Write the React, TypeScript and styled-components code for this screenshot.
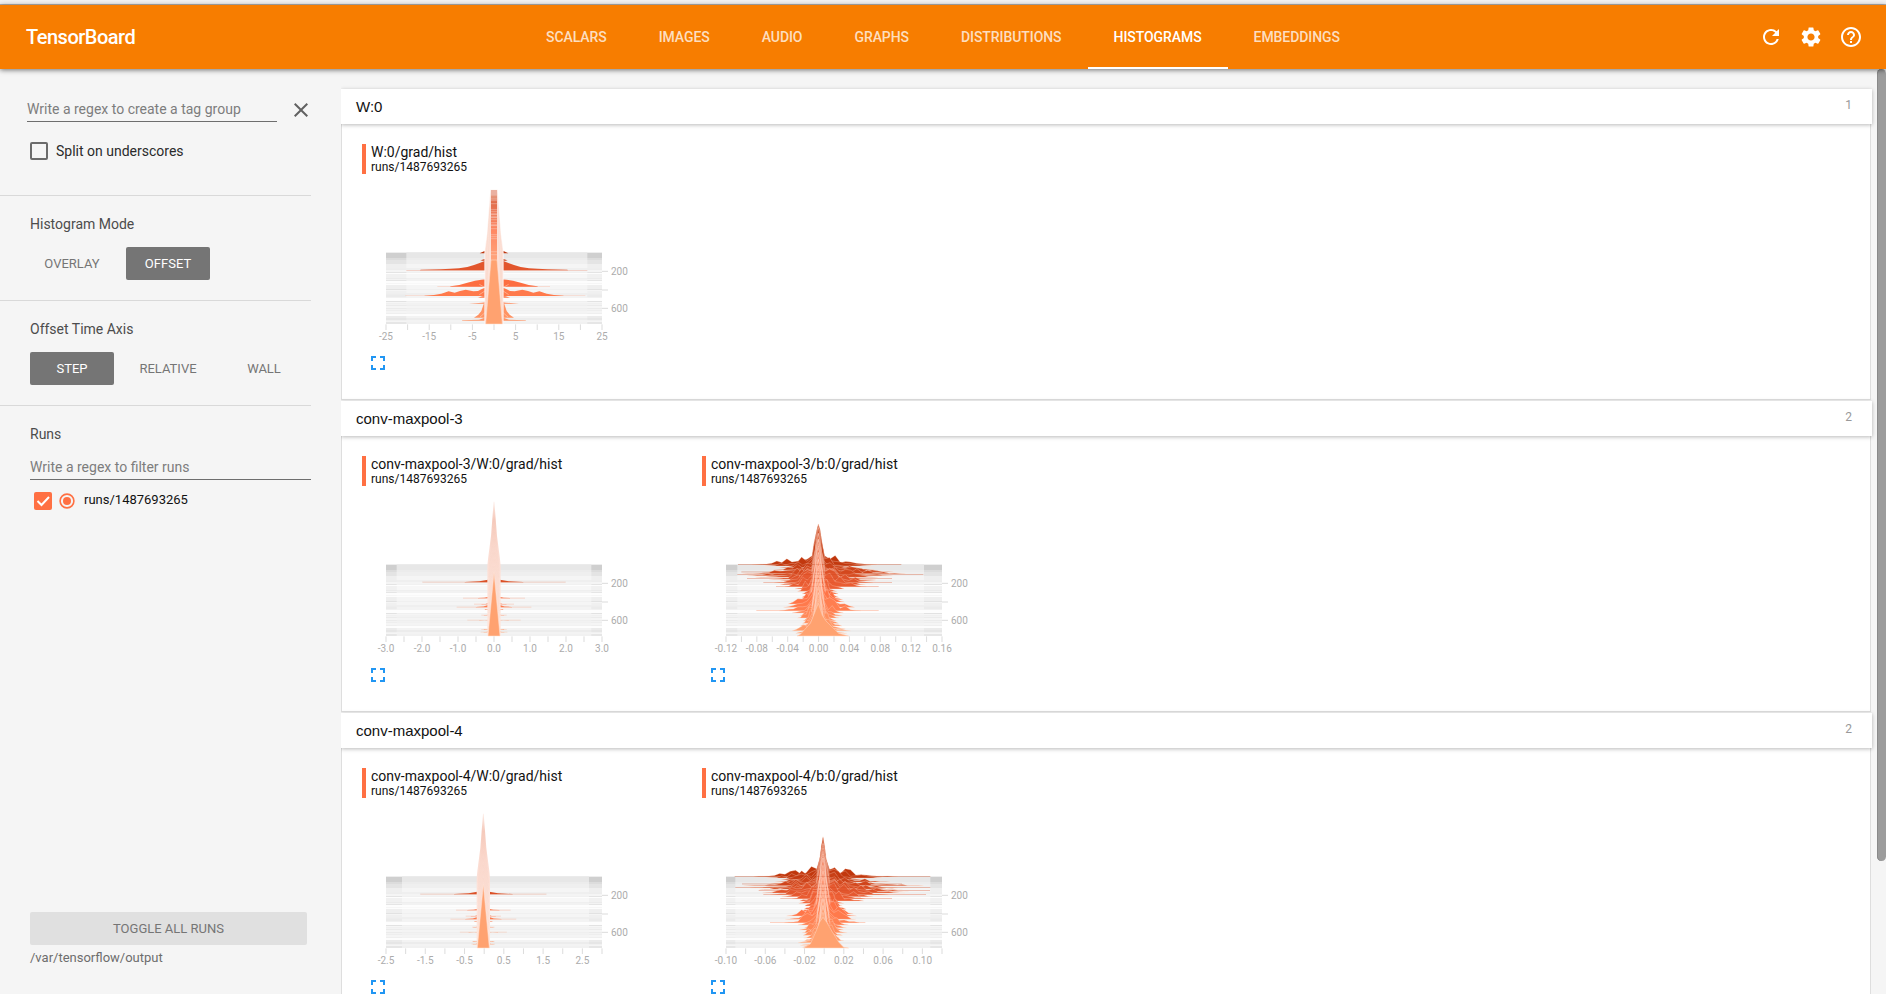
import React from 'react';
import styled, { createGlobalStyle } from 'styled-components';
import { MdRefresh, MdSettings, MdHelpOutline, MdClose, MdFullscreen } from 'react-icons/md';

const GlobalStyle = createGlobalStyle`
  * { box-sizing: border-box; }
  html, body { margin: 0; padding: 0; height: 100%; overflow: hidden; }
  body { background: #f5f5f5; font-family: Roboto, sans-serif; }
  #root { height: 100%; }
`;

const Page = styled.div`
  display: flex;
  flex-direction: column;
  height: 100vh;
  overflow: hidden;
`;

const WindowEdge = styled.div`
  flex: none;
  height: 5px;
  background: #f2f1f0;
  border-bottom: 1px solid #b6b3b0;
`;

const Toolbar = styled.header`
  flex: none;
  position: relative;
  z-index: 2;
  height: 64px;
  display: flex;
  align-items: stretch;
  background: #f77d00;
  box-shadow: 0 1px 5px rgba(0, 0, 0, 0.55);
`;

const Brand = styled.div`
  width: 520px;
  padding-left: 26px;
  line-height: 64px;
  font-size: 20px;
  font-weight: 500;
  letter-spacing: -0.5px;
  color: #fff;
`;

const Tabs = styled.nav`
  display: flex;
  flex: 1;
`;

const Tab = styled.div<{ $active?: boolean }>`
  padding: 0 26px;
  line-height: 64px;
  font-size: 14px;
  font-weight: 500;
  letter-spacing: -0.07px;
  color: ${(p) => (p.$active ? '#fff' : 'rgba(255,255,255,0.76)')};
  box-shadow: ${(p) => (p.$active ? 'inset 0 -2px 0 #fff' : 'none')};
`;

const Actions = styled.div`
  display: flex;
  align-items: center;
  gap: 16px;
  padding-right: 23px;
  color: #fff;
  svg { display: block; }
`;

const Main = styled.div`
  flex: 1;
  min-height: 0;
  display: flex;
`;

const Sidebar = styled.aside`
  flex: none;
  width: 341px;
  display: flex;
  flex-direction: column;
  padding-right: 30px;
`;

const Group = styled.section<{ $height: number }>`
  height: ${(p) => p.$height}px;
  border-bottom: 1px solid #d9d9d9;
  padding-left: 30px;
`;

const RegexRow = styled.div`
  display: flex;
  align-items: center;
  margin-left: -3px;
  padding-top: 28px;
  color: #616161;
  svg { flex: none; margin: 0 0 0 12px; }
`;

const Field = styled.div<{ $width: number }>`
  flex: none;
  width: ${(p) => p.$width}px;
  height: 25px;
  line-height: 24px;
  font-size: 14px;
  color: #7d7d7d;
  border-bottom: 1px solid #6e6e6e;
  white-space: nowrap;
`;

const CheckRow = styled.div`
  display: flex;
  align-items: center;
  margin-top: 19px;
  gap: 8px;
  font-size: 14px;
  line-height: 20px;
  color: #2b2b2b;
`;

const EmptyBox = styled.span`
  width: 18px;
  height: 18px;
  border: 2px solid #6b6b6b;
  border-radius: 2px;
`;

const Heading = styled.h3`
  margin: 0;
  padding-top: 18px;
  font-size: 14px;
  font-weight: 400;
  line-height: 20px;
  color: #4c4c4c;
`;

const Buttons = styled.div`
  display: flex;
  gap: 12px;
  margin-top: 13px;
`;

const Button = styled.div<{ $on?: boolean }>`
  width: 84px;
  height: 33px;
  border-radius: 2px;
  text-align: center;
  font-size: 13px;
  line-height: 33px;
  color: ${(p) => (p.$on ? '#fff' : '#757575')};
  background: ${(p) => (p.$on ? '#757575' : 'transparent')};
`;

const RunsGroup = styled.section`
  flex: 1;
  padding-left: 30px;
`;

const FilterWrap = styled.div`
  padding-top: 11px;
`;

const RunRow = styled.div`
  display: flex;
  align-items: center;
  height: 18px;
  margin: 12px 0 0 4px;
  font-size: 13px;
  color: #111;
`;

const RadioIcon = styled.svg`
  margin-left: 7px;
`;

const RunName = styled.span`
  margin-left: 9px;
  line-height: 16px;
  margin-top: -2px;
`;

const SidebarFoot = styled.footer`
  padding: 0 4px 22px 30px;
`;

const ToggleAll = styled.div`
  height: 33px;
  line-height: 33px;
  border-radius: 2px;
  background: #e0e0e0;
  color: #757575;
  font-size: 13px;
  text-align: center;
`;

const LogDir = styled.div`
  margin-top: 3px;
  height: 24px;
  line-height: 20px;
  font-size: 13px;
  color: #6d6d6d;
`;

const Content = styled.main`
  flex: 1;
  min-width: 0;
  padding: 20px 5px 0 0;
  overflow: hidden;
`;

const Panel = styled.section`
  height: 312px;
`;

const PanelHead = styled.div`
  position: relative;
  display: flex;
  justify-content: space-between;
  height: 35px;
  padding: 0 20px 0 15px;
  background: #fff;
  box-shadow: 0 1px 4px rgba(0, 0, 0, 0.28);
  font: 15px/35px "Liberation Sans", Arial, sans-serif;
  color: #111;
`;

const Count = styled.span`
  font: 12px/32px Roboto, sans-serif;
  color: #999;
`;

const PanelBody = styled.div`
  height: 276px;
  margin: 0 1px 0 0;
  padding: 20px 0 0 20px;
  display: flex;
  background: #fff;
  border: 1px solid #dedede;
  border-top: none;
`;

const Card = styled.article`
  width: 340px;
`;

const CardHead = styled.div`
  height: 30px;
  border-left: 4px solid #ff7043;
  padding-left: 5px;
  color: #111;
`;

const Tag = styled.div`
  font-size: 14px;
  line-height: 16px;
`;

const Run = styled.div`
  font-size: 12px;
  line-height: 14px;
`;

const ChartSvg = styled.svg`
  display: block;
  height: 177px;
  width: 300px;
  overflow: visible;
  text { font: 30px Roboto, sans-serif; fill: #acacac; }
`;

const Expand = styled.div`
  margin-left: 4px;
  height: 24px;
  color: #2196f3;
  svg { display: block; }
`;

const ScrollTrack = styled.div`
  flex: none;
  width: 9px;
`;

const ScrollThumb = styled.div`
  height: 792px;
  border-radius: 5px;
  background: #9c9c9c;
  box-shadow: inset 1px 0 0 #8a8a8a;
`;

/* ---- histogram drawing: 3 units per pixel, plot spans x 72..720, y 326..540 ---- */

type Pt = [number, number];
const LEFT = 72;
const RIGHT = 720;
const TOP = 326;
const BOTTOM = 540;

const STEPS = [0, 4, 9, 16, 22, 27, 33, 38, 44, 49, 54, 60, 66, 73, 80, 88, 98, 105, 112, 118, 128, 138, 145, 153, 160, 168, 176, 184, 192, 198, 206, 212];

const lerp = (a: number, b: number, t: number) => a + (b - a) * t;
const STOPS: [number, number[]][] = [
  [0, [191, 54, 12]],
  [0.25, [226, 86, 45]],
  [0.5, [255, 112, 67]],
  [1, [255, 162, 112]],
];
function tone(t: number) {
  for (let i = 1; i < STOPS.length; i++) {
    if (t <= STOPS[i][0]) {
      const [a, ca] = STOPS[i - 1];
      const [b, cb] = STOPS[i];
      const k = (t - a) / (b - a);
      return `rgb(${ca.map((v, n) => Math.round(lerp(v, cb[n], k))).join(',')})`;
    }
  }
  return 'rgb(255,162,112)';
}

function noise(seed: number) {
  let s = seed * 7919 + 13;
  return () => {
    s = (s * 16807) % 2147483647;
    return s / 2147483647;
  };
}

const poly = (pts: Pt[]) => pts.map((p) => p.join(',')).join(' ');

function GreyRows({ l, r }: { l: number; r: number }) {
  const bands: [number, number, string, string][] = [
    [0, 16, '#cfcfcf', '#e7e7e7'],
    [16, 6, '#dcdcdc', '#ececec'],
    [22, 12, '#e4e4e4', '#efefef'],
    [34, 14, '#efefef', '#f5f5f5'],
    [48, 3, '#e4e4e4', '#f1f1f1'],
    [54, 2, '#e8e8e8', '#f3f3f3'],
    [58, 3, '#e4e4e4', '#f1f1f1'],
    [64, 12, '#f1f1f1', '#f7f7f7'],
    [77, 3, '#e2e2e2', '#f0f0f0'],
    [82, 3, '#e5e5e5', '#f2f2f2'],
    [91, 3, '#f6f6f6', '#f9f9f9'],
    [97, 12, '#efefef', '#f5f5f5'],
    [109, 3, '#e2e2e2', '#f0f0f0'],
    [113, 10, '#f0f0f0', '#f5f5f5'],
    [123, 3, '#e4e4e4', '#f1f1f1'],
    [127, 8, '#ebebeb', '#f3f3f3'],
    [145, 3, '#e2e2e2', '#f0f0f0'],
    [150, 3, '#e9e9e9', '#f4f4f4'],
    [156, 3, '#e2e2e2', '#f0f0f0'],
    [162, 2, '#e6e6e6', '#f3f3f3'],
    [167, 3, '#e2e2e2', '#f0f0f0'],
    [173, 3, '#e6e6e6', '#f2f2f2'],
    [180, 3, '#e8e8e8', '#f3f3f3'],
    [190, 14, '#ebebeb', '#f3f3f3'],
    [198, 2, '#dedede', '#eeeeee'],
    [207, 7, '#e6e6e6', '#f1f1f1'],
  ];
  return (
    <g>
      <rect x={LEFT} y={TOP} width={RIGHT - LEFT} height={BOTTOM - TOP} fill="#fdfdfd" />
      {bands.map(([y, h, side, mid]) => (
        <g key={y}>
          <rect x={LEFT} y={TOP + y} width={RIGHT - LEFT} height={h} fill={side} />
          <rect x={l} y={TOP + y} width={r - l} height={h} fill={mid} />
        </g>
      ))}
    </g>
  );
}

function Axes({ count, labels }: { count: number; labels: string[] }) {
  const gap = (RIGHT - LEFT) / (count - 1);
  return (
    <g>
      {Array.from({ length: count }, (_, i) => (
        <rect key={i} x={LEFT + i * gap - 1.5} y={BOTTOM + 1} width={3} height={17} fill="#dcdcdc" />
      ))}
      {labels.map((t, i) => (
        <text key={t} x={LEFT + i * gap * 2} y={587} textAnchor="middle">{t}</text>
      ))}
      {[382, 438, 493].map((y) => (
        <rect key={y} x={RIGHT} y={y - 1.5} width={18} height={3} fill="#dcdcdc" />
      ))}
      <text x={747} y={392}>200</text>
      <text x={747} y={503}>600</text>
    </g>
  );
}

function Flare({ y, c, pts, t }: { y: number; c: number; pts: Pt[]; t: number }) {
  const right: Pt[] = pts.map(([d, h]) => [c + d, y - h]);
  const left: Pt[] = pts.map(([d, h]) => [c - d, y - h]);
  return <polygon points={poly([...left.reverse(), ...right])} fill={tone(t)} />;
}

function WideSpike() {
  const stripes = noise(4);
  const c = 396;
  return (
    <g>
      <Flare y={328} c={c} t={0} pts={[[20, 8], [30, 6], [43, 0]]} />
      <Flare y={350} c={c} t={0.1} pts={[[20, 7], [30, 4], [41, 0]]} />
      <Flare y={379} c={c} t={0.25} pts={[[20, 32], [30, 27], [45, 21], [60, 16], [80, 10], [105, 6], [130, 5], [160, 3], [220, 1.5], [222, 0]]} />
      <rect x={133} y={378} width={543} height={1.5} fill={tone(0.3)} opacity={0.45} />
      <Flare y={428} c={c} t={0.48} pts={[[20, 22], [38, 21], [57, 18], [80, 12], [104, 5], [130, 1.5], [132, 0]]} />
      <rect x={226} y={427} width={338} height={1.5} fill={tone(0.6)} opacity={0.4} />
      <Flare y={456} c={c} t={0.6} pts={[[20, 28], [38, 20], [48, 15], [62, 14], [85, 19], [102, 15], [118, 10], [136, 14], [158, 7], [180, 3], [208, 1], [209, 0]]} />
      <rect x={130} y={454} width={540} height={1.5} fill={tone(0.6)} opacity={0.35} />
      <Flare y={461} c={c} t={0.6} pts={[[20, 6], [35, 4], [48, 0]]} />
      <Flare y={479} c={c} t={0.75} pts={[[20, 5], [36, 3], [75, 0]]} />
      <Flare y={521} c={c} t={0.85} pts={[[20, 62], [26, 52], [32, 38], [38, 20], [47, 9], [60, 0]]} />
      <Flare y={530} c={c} t={0.85} pts={[[20, 17], [30, 8], [45, 3], [95, 1], [96, 0]]} />
      <g stroke="#ffd8c5" strokeWidth={1.5} fill="none">
        <path d="M422 431l18-10M422 440l18 12M370 431l-18-10M370 440l-18 12M422 505l16 14M370 505l-16 14" />
      </g>
      <polygon points="385,137 407,137 417,270 424,322 424,540 368,540 368,322 375,270" fill="#fce1d8" stroke="#fff" strokeWidth={1.5} />
      <g stroke="#f8c9b7" strokeWidth={1} fill="none" opacity={0.7}>
        <path d="M384 190L374 320V540M386 220L378 350 371 500M408 190L418 320V540M406 220L414 350 421 500" />
      </g>
      <rect x={387} y={138} width={18} height={16} fill="#eab0a0" />
      {Array.from({ length: 65 }, (_, i) => {
        const y = 154 + i * 3;
        const v = stripes();
        const fade = v < 0.25 ? 0.45 : i < 6 ? 0.6 : 1;
        return <rect key={i} x={387} y={y} width={18} height={3} fill={tone(Math.min(0.95, 0.1 + (i / 65) * 0.75))} opacity={fade} />;
      })}
      <polygon points="387,348 405,348 421,540 371,540" fill="#ffa270" stroke="#ffe0d2" strokeWidth={1.5} />
    </g>
  );
}

function NarrowSpike({ c, w }: { c: number; w: number }) {
  const rows: [number, number, number, number][] = [
    [379, 8, 215, 0.2], [427, 4, 93, 0.48], [445, 3, 60, 0.55], [454, 7, 112, 0.6],
    [461, 2, 28, 0.6], [478, 2, 38, 0.75], [493, 1, 80, 0.8], [521, 1, 38, 0.85], [529, 3, 40, 0.9],
  ];
  return (
    <g>
      {rows.map(([y, h, len, t]) => (
        <g key={y}>
          <rect x={c - len * w} y={y - 1.5} width={len * 2 * w} height={1.5} fill={tone(t)} opacity={0.45} />
          <Flare y={y} c={c} t={t} pts={[[10, h + 3], [18, h], [18 + len * 0.12, h * 0.4], [18 + len * 0.32, 1], [18 + len * 0.33, 0]]} />
        </g>
      ))}
      <defs>
        <linearGradient id={`spear${c}`} x1="0" y1="0" x2="0" y2="1">
          <stop offset="0" stopColor="#fcece6" />
          <stop offset="0.13" stopColor="#f5cabc" />
          <stop offset="0.35" stopColor="#fbdcd2" />
          <stop offset="0.6" stopColor="#fde3da" />
          <stop offset="1" stopColor="#fee6dc" />
        </linearGradient>
      </defs>
      <polygon
        points={`${c - 1},137 ${c + 1},137 ${c + 9},240 ${c + 18},310 ${c + 20},330 ${c + 20},540 ${c - 20},540 ${c - 20},330 ${c - 18},310 ${c - 9},240`}
        fill={`url(#spear${c})`}
      />
      <g fill="none" stroke="#f9cbb9" strokeWidth={1} opacity={0.5}>
        {[0, 1, 2, 3, 4, 5, 6, 7].map((i) => (
          <path key={i} d={`M${c - 16} ${345 + i * 20}L${c} ${190 + i * 20}L${c + 16} ${345 + i * 20}`} />
        ))}
      </g>
      <polygon points={`${c},350 ${c + 18},540 ${c - 18},540`} fill="#ffa270" stroke="#ffe0d2" strokeWidth={1.5} />
    </g>
  );
}

/* key rows: [offset from plot top, left reach, right reach, shoulder height, peak height] */
type Key = [number, number, number, number, number];

interface RidgesProps { c: number; seed: number; keys: Key[]; front: Pt[]; tails: [number, number, number][] }

function Ridges({ c, seed, keys, front, tails }: RidgesProps) {
  const at = (y: number): Key => {
    for (let i = 1; i < keys.length; i++) {
      if (y <= keys[i][0]) {
        const a = keys[i - 1];
        const b = keys[i];
        const k = (y - a[0]) / (b[0] - a[0]);
        return a.map((v, n) => lerp(v, b[n], k)) as Key;
      }
    }
    return keys[keys.length - 1];
  };
  return (
    <g strokeLinejoin="round">
      {STEPS.map((s, idx) => {
        const rnd = noise(idx * 31 + seed);
        rnd();
        const [, l, r, sh, peak] = at(s);
        const y = TOP + s;
        const side = (reach: number, dir: number): Pt[] => {
          const out: Pt[] = [];
          const len = reach * (0.72 + rnd() * 0.33);
          const n = Math.max(5, Math.round(len / 17));
          for (let i = 0; i <= n; i++) {
            const f = i / n;
            const d = 19 + (len - 19) * f;
            const bump = rnd() > 0.72 ? 1.75 : 0.45 + rnd() * 0.6;
            const h = i === n ? 0 : sh * Math.pow(1 - f, 1.45) * (i === 0 ? 1.2 : bump);
            out.push([c + dir * d, y - h]);
          }
          return out;
        };
        const half = 9 + rnd() * 5;
        const pts: Pt[] = [
          ...side(l, -1).reverse(),
          [c - half, y - peak * (0.4 + rnd() * 0.12)],
          [c - 5, y - peak * (0.7 + rnd() * 0.1)],
          [c, y - peak * (0.9 + rnd() * 0.1)],
          [c + 5, y - peak * (0.7 + rnd() * 0.1)],
          [c + half, y - peak * (0.38 + rnd() * 0.12)],
          ...side(r, 1),
        ];
        return <polygon key={s} points={poly(pts)} fill={tone(s / 214)} stroke="#ffe0d2" strokeOpacity={0.62} strokeWidth={1.4} />;
      })}
      {tails.map(([dy, a, b]) => (
        <rect key={dy} x={a} y={TOP + dy - 1} width={b - a} height={1.8} fill={tone(dy / 214)} opacity={0.55} />
      ))}
      <g fill="none" stroke="#ffdfd2" strokeWidth={1.8} opacity={0.75}>
        {[0, 1, 2, 3, 4, 5, 6, 7, 8].map((i) => {
          const y = 345 + i * 20;
          const w = 12 + (i % 3) * 3;
          return <path key={i} d={`M${c - w - 3} ${y + 24}L${c - w + 3} ${y - 20}L${c - 5} ${y - 74}L${c} ${y - 95}L${c + 5} ${y - 72}L${c + w - 3} ${y - 18}L${c + w + 3} ${y + 24}`} />;
        })}
      </g>
      <polygon points={poly(front)} fill="#ffa270" stroke="#ffd9c6" strokeWidth={1.5} />
    </g>
  );
}

const KEYS3: Key[] = [
  [0, 200, 205, 22, 134], [10, 130, 140, 22, 134], [20, 195, 200, 18, 134], [29, 240, 275, 18, 134],
  [38, 220, 230, 20, 136], [49, 160, 225, 24, 138], [55, 130, 160, 28, 138], [66, 120, 145, 28, 138], [80, 60, 55, 28, 130],
  [92, 45, 60, 30, 128], [117, 85, 85, 34, 128], [138, 130, 125, 28, 125], [148, 80, 85, 26, 118],
  [170, 45, 65, 26, 112], [195, 80, 100, 22, 106], [214, 65, 85, 18, 98],
];
const KEYS4: Key[] = [
  [0, 210, 270, 20, 122], [10, 140, 150, 22, 122], [20, 210, 240, 18, 126], [29, 250, 310, 17, 130],
  [38, 225, 280, 20, 130], [49, 175, 245, 24, 130], [55, 160, 210, 28, 132], [66, 110, 165, 28, 132], [80, 70, 70, 28, 128],
  [92, 50, 60, 28, 126], [117, 105, 105, 30, 124], [138, 130, 115, 26, 120], [148, 75, 75, 26, 114],
  [170, 65, 70, 26, 108], [195, 75, 65, 20, 102], [214, 70, 65, 16, 96],
];

type Kind = 'wide' | 'w3' | 'w4' | 'b3' | 'b4';

function Chart({ kind }: { kind: Kind }) {
  const grey = { wide: [133, 676], w3: [104, 688], w4: [120, 681], b3: [106, 666], b4: [100, 685] }[kind];
  return (
    <ChartSvg viewBox="0 90 900 531">
      <GreyRows l={grey[0]} r={grey[1]} />
      {kind === 'wide' && <><WideSpike /><Axes count={11} labels={['-25', '-15', '-5', '5', '15', '25']} /></>}
      {kind === 'w3' && <><NarrowSpike c={396} w={1} /><Axes count={13} labels={['-3.0', '-2.0', '-1.0', '0.0', '1.0', '2.0', '3.0']} /></>}
      {kind === 'w4' && <><NarrowSpike c={364} w={0.88} /><Axes count={12} labels={['-2.5', '-1.5', '-0.5', '0.5', '1.5', '2.5']} /></>}
      {kind === 'b3' && (
        <>
          <Ridges
            c={349}
            seed={11}
            keys={KEYS3}
            tails={[[0, 108, 598], [22, 118, 520], [29, 106, 664], [42, 135, 570], [53, 184, 570], [66, 222, 530], [138, 163, 530]]}
            front={[[285, 540], [295, 535], [325, 502], [338, 470], [349, 442], [361, 478], [372, 495], [410, 532], [440, 540]]}
          />
          <Axes count={15} labels={['-0.12', '-0.08', '-0.04', '0.00', '0.04', '0.08', '0.12', '0.16']} />
        </>
      )}
      {kind === 'b4' && (
        <>
          <Ridges
            c={363}
            seed={47}
            keys={KEYS4}
            tails={[[0, 98, 685], [22, 120, 600], [32, 100, 685], [42, 170, 684], [54, 184, 672], [66, 235, 570], [138, 204, 490]]}
            front={[[305, 540], [325, 528], [342, 490], [353, 462], [363, 448], [375, 464], [390, 490], [410, 522], [425, 538], [440, 540]]}
          />
          <Axes count={12} labels={['-0.10', '-0.06', '-0.02', '0.02', '0.06', '0.10']} />
        </>
      )}
    </ChartSvg>
  );
}

const PANELS: { title: string; cards: { tag: string; kind: Kind }[] }[] = [
  { title: 'W:0', cards: [{ tag: 'W:0/grad/hist', kind: 'wide' }] },
  { title: 'conv-maxpool-3', cards: [{ tag: 'conv-maxpool-3/W:0/grad/hist', kind: 'w3' }, { tag: 'conv-maxpool-3/b:0/grad/hist', kind: 'b3' }] },
  { title: 'conv-maxpool-4', cards: [{ tag: 'conv-maxpool-4/W:0/grad/hist', kind: 'w4' }, { tag: 'conv-maxpool-4/b:0/grad/hist', kind: 'b4' }] },
];

const TABS = ['SCALARS', 'IMAGES', 'AUDIO', 'GRAPHS', 'DISTRIBUTIONS', 'HISTOGRAMS', 'EMBEDDINGS'];

export default function App() {
  return (
    <Page>
      <GlobalStyle />
      <WindowEdge />
      <Toolbar>
        <Brand>TensorBoard</Brand>
        <Tabs>{TABS.map((t) => <Tab key={t} $active={t === 'HISTOGRAMS'}>{t}</Tab>)}</Tabs>
        <Actions>
          <MdRefresh size={24} />
          <MdSettings size={24} />
          <MdHelpOutline size={24} />
        </Actions>
      </Toolbar>
      <Main>
        <Sidebar>
          <Group $height={127}>
            <RegexRow>
              <Field $width={250}>Write a regex to create a tag group</Field>
              <MdClose size={24} />
            </RegexRow>
            <CheckRow><EmptyBox />Split on underscores</CheckRow>
          </Group>
          <Group $height={105}>
            <Heading>Histogram Mode</Heading>
            <Buttons><Button>OVERLAY</Button><Button $on>OFFSET</Button></Buttons>
          </Group>
          <Group $height={105}>
            <Heading>Offset Time Axis</Heading>
            <Buttons><Button $on>STEP</Button><Button>RELATIVE</Button><Button>WALL</Button></Buttons>
          </Group>
          <RunsGroup>
            <Heading>Runs</Heading>
            <FilterWrap><Field $width={281}>Write a regex to filter runs</Field></FilterWrap>
            <RunRow>
              <svg width="18" height="18" viewBox="0 0 18 18">
                <rect width="18" height="18" rx="2" fill="#ff7043" />
                <path d="M3.5 9l4 4L15 5" fill="none" stroke="#fff" strokeWidth="2" />
              </svg>
              <RadioIcon width="16" height="16" viewBox="0 0 16 16">
                <circle cx="8" cy="8" r="6.9" fill="none" stroke="#ff7043" strokeWidth="1.6" />
                <circle cx="8" cy="8" r="4" fill="#ff7043" />
              </RadioIcon>
              <RunName>runs/1487693265</RunName>
            </RunRow>
          </RunsGroup>
          <SidebarFoot>
            <ToggleAll>TOGGLE ALL RUNS</ToggleAll>
            <LogDir>/var/tensorflow/output</LogDir>
          </SidebarFoot>
        </Sidebar>
        <Content>
          {PANELS.map((p) => (
            <Panel key={p.title}>
              <PanelHead>{p.title}<Count>{p.cards.length}</Count></PanelHead>
              <PanelBody>
                {p.cards.map((card) => (
                  <Card key={card.tag}>
                    <CardHead><Tag>{card.tag}</Tag><Run>runs/1487693265</Run></CardHead>
                    <Chart kind={card.kind} />
                    <Expand><MdFullscreen size={24} /></Expand>
                  </Card>
                ))}
              </PanelBody>
            </Panel>
          ))}
        </Content>
        <ScrollTrack><ScrollThumb /></ScrollTrack>
      </Main>
    </Page>
  );
}
